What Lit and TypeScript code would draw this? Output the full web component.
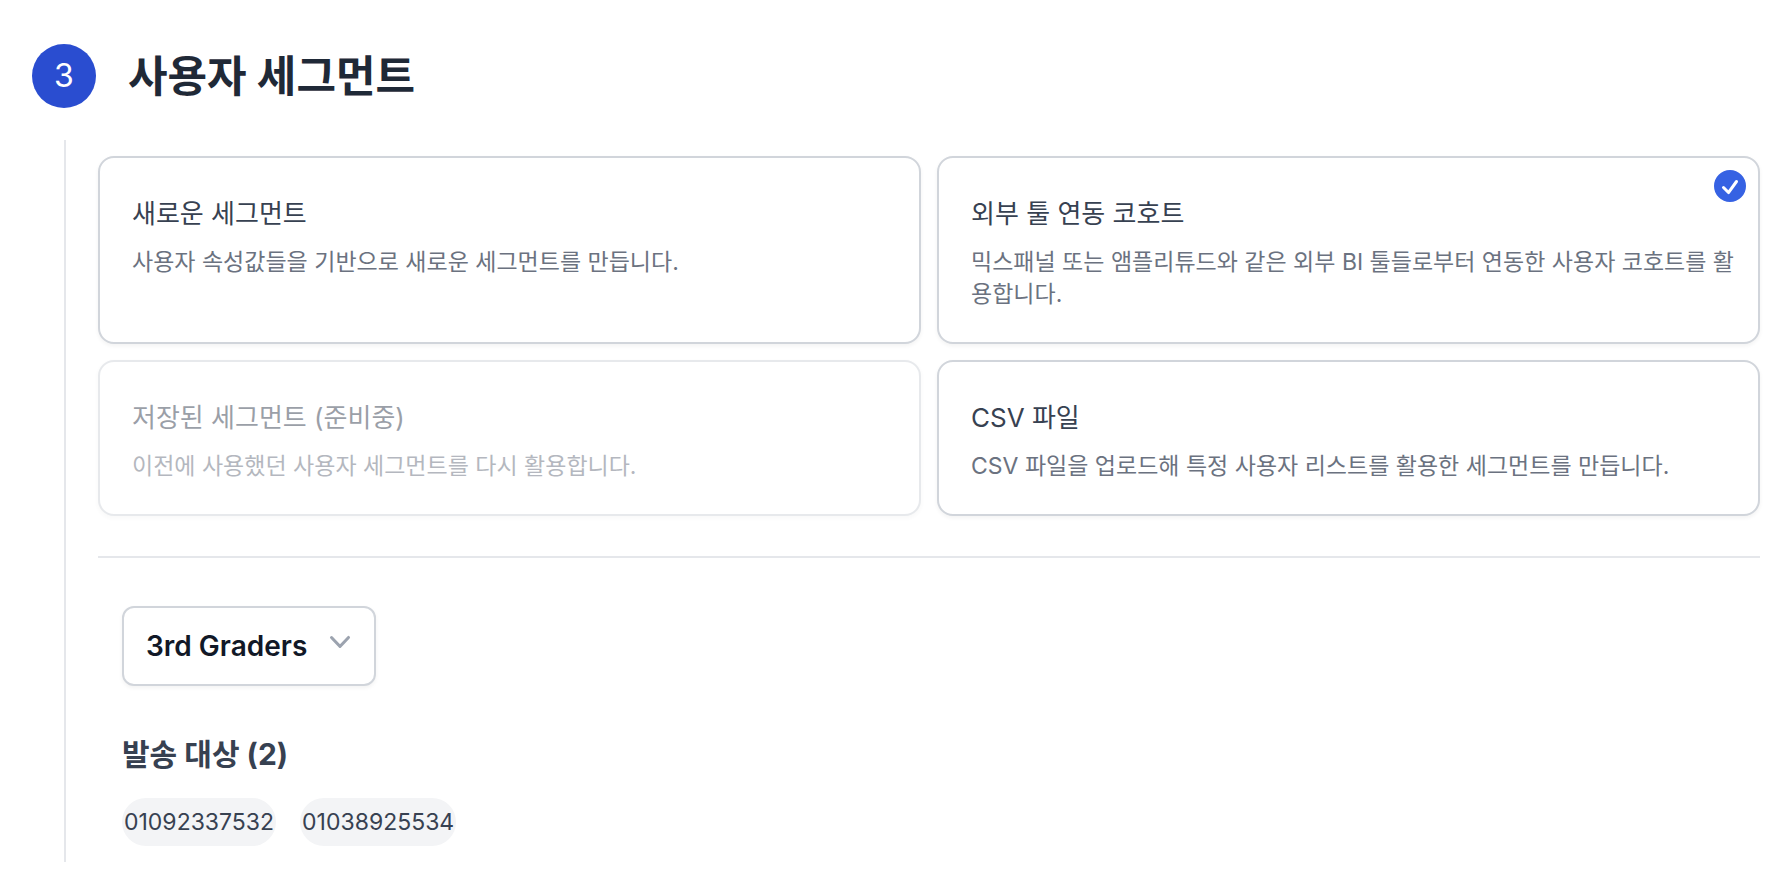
import { LitElement, html, css } from "lit";
import { customElement, property, state } from "lit/decorators.js";

interface SegmentOption {
  id: string;
  title: string;
  description: string;
  disabled?: boolean;
}

const OPTIONS: SegmentOption[] = [
  {
    id: "new",
    title: "새로운 세그먼트",
    description: "사용자 속성값들을 기반으로 새로운 세그먼트를 만듭니다.",
  },
  {
    id: "cohort",
    title: "외부 툴 연동 코호트",
    description:
      "믹스패널 또는 앰플리튜드와 같은 외부 BI 툴들로부터 연동한 사용자 코호트를 활용합니다.",
  },
  {
    id: "saved",
    title: "저장된 세그먼트 (준비중)",
    description: "이전에 사용했던 사용자 세그먼트를 다시 활용합니다.",
    disabled: true,
  },
  {
    id: "csv",
    title: "CSV 파일",
    description: "CSV 파일을 업로드해 특정 사용자 리스트를 활용한 세그먼트를 만듭니다.",
  },
];

@customElement("segment-options")
export class SegmentOptions extends LitElement {
  @property() value = "cohort";

  static styles = css`
    :host {
      display: block;
    }
    .grid {
      display: grid;
      grid-template-columns: repeat(2, minmax(0, 1fr));
      gap: 16px;
    }
    .card {
      position: relative;
      display: flex;
      flex-direction: column;
      gap: 12px;
      padding: 36px 22px 32px 32px;
      border: 2px solid #d1d5db;
      border-radius: 16px;
      background: #fff;
      box-shadow: 0 2px 4px rgba(0, 0, 0, 0.05);
      cursor: pointer;
    }
    .card.disabled {
      opacity: 0.5;
      cursor: default;
    }
    .card:has(:focus-visible) {
      border-color: #3662e3;
    }
    .radio {
      position: absolute;
      inset: 0;
      margin: 0;
      opacity: 0;
    }
    .title {
      font-size: 26px;
      line-height: 40px;
      color: #374151;
    }
    .description {
      font-size: 23px;
      line-height: 32px;
      color: #6b7280;
    }
    .check {
      position: absolute;
      top: 8px;
      right: 8px;
      width: 40px;
      height: 40px;
      fill: #3662e3;
    }
  `;

  private select(id: string) {
    this.value = id;
  }

  render() {
    return html`
      <div class="grid" role="radiogroup" aria-label="사용자 세그먼트">
        ${OPTIONS.map(
          (o) => html`
            <label class="card ${o.disabled ? "disabled" : ""}" for=${o.id}>
              <input
                class="radio"
                type="radio"
                name="segment"
                id=${o.id}
                .checked=${this.value === o.id}
                ?disabled=${o.disabled}
                @change=${() => this.select(o.id)}
              />
              <span class="title">${o.title}</span>
              <span class="description">${o.description}</span>
              ${this.value === o.id
                ? html`<svg class="check" viewBox="0 0 20 20" aria-hidden="true">
                    <path
                      fill-rule="evenodd"
                      clip-rule="evenodd"
                      d="M10 18a8 8 0 100-16 8 8 0 000 16zm3.857-9.809a.75.75 0 00-1.214-.882l-3.483 4.79-1.88-1.88a.75.75 0 10-1.06 1.061l2.5 2.5a.75.75 0 001.137-.089l4-5.5z"
                    />
                  </svg>`
                : null}
            </label>
          `
        )}
      </div>
    `;
  }
}

@customElement("app-root")
export class AppRoot extends LitElement {
  @state() private recipients = ["01092337532", "01038925534"];

  static styles = css`
    :host {
      display: block;
      padding: 44px 30px 24px 32px;
      font-family: Inter, "Noto Sans CJK KR", sans-serif;
      background: #fff;
      color: #374151;
    }
    .header {
      display: flex;
      align-items: center;
      gap: 32px;
    }
    .step {
      display: flex;
      align-items: center;
      justify-content: center;
      width: 64px;
      height: 64px;
      border-radius: 50%;
      background: #2a4dd0;
      color: #fff;
      font-size: 32px;
      line-height: 40px;
    }
    .heading {
      margin: 0;
      font-size: 43px;
      line-height: 64px;
      font-weight: 700;
      color: #1f2937;
    }
    .body {
      margin: 32px 0 0 32px;
      padding: 16px 0 16px 32px;
      border-left: 2px solid #e5e7eb;
    }
    .divider {
      margin: 40px 0 0;
      border: 0;
      border-top: 2px solid #e5e7eb;
    }
    .target {
      display: flex;
      flex-direction: column;
      align-items: flex-start;
      padding: 48px 24px 0;
    }
    .picker {
      position: relative;
      display: flex;
    }
    .select {
      appearance: none;
      height: 80px;
      margin: 0;
      padding: 0 66px 0 22px;
      border: 2px solid #d1d5db;
      border-radius: 12px;
      background: #fff;
      box-shadow: 0 2px 4px rgba(0, 0, 0, 0.05);
      font-family: inherit;
      font-size: 28px;
      font-weight: 600;
      color: #111827;
    }
    .chevron {
      position: absolute;
      top: 16px;
      right: 16px;
      width: 40px;
      height: 40px;
      fill: #9ca3af;
      pointer-events: none;
    }
    .subheading {
      margin: 48px 0 0;
      font-size: 30px;
      line-height: 40px;
      font-weight: 700;
    }
    .pills {
      display: flex;
      flex-wrap: wrap;
      gap: 24px;
      margin: 24px 0 0;
      padding: 0;
      list-style: none;
    }
    .pill {
      padding: 0 2px;
      border-radius: 24px;
      background: #f3f4f6;
      font-size: 23px;
      line-height: 48px;
    }
  `;

  render() {
    return html`
      <header class="header">
        <span class="step">3</span>
        <h1 class="heading">사용자 세그먼트</h1>
      </header>
      <section class="body">
        <segment-options></segment-options>
        <hr class="divider" />
        <div class="target">
          <div class="picker">
            <select class="select" aria-label="코호트">
              <option>3rd Graders</option>
            </select>
            <svg class="chevron" viewBox="0 0 20 20" aria-hidden="true">
              <path
                fill-rule="evenodd"
                clip-rule="evenodd"
                d="M5.23 7.21a.75.75 0 011.06.02L10 11.168l3.71-3.938a.75.75 0 111.08 1.04l-4.25 4.5a.75.75 0 01-1.08 0l-4.25-4.5a.75.75 0 01.02-1.06z"
              />
            </svg>
          </div>
          <h2 class="subheading">발송 대상 (${this.recipients.length})</h2>
          <ul class="pills">
            ${this.recipients.map((r) => html`<li class="pill">${r}</li>`)}
          </ul>
        </div>
      </section>
    `;
  }
}
